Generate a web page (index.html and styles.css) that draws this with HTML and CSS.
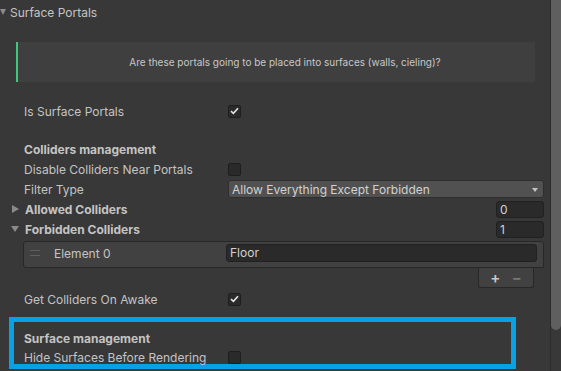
FILE: index.html
```html
<!DOCTYPE html>
<html lang="en">
<head>
    <meta charset="UTF-8">
    <meta name="viewport" content="width=device-width, initial-scale=1.0">
    <title>Surface Portals</title>
    <link rel="stylesheet" href="styles.css">
</head>
<body>
    <div class="window">
        <div class="inspector">
            <div class="foldout-header"><span class="tri-down"></span>Surface Portals</div>

            <div class="help-box">Are these portals going to be placed into surfaces (walls, cieling)?</div>

            <div class="field-row first">
                <span class="label">Is Surface Portals</span>
                <span class="toggle">
                    <svg width="9" height="8" viewBox="0 0 9 8"><path d="M1 4.2 L3.4 6.4 L8 1.2" fill="none" stroke="#e4e4e4" stroke-width="1.6"/></svg>
                </span>
            </div>

            <div class="section-title">Colliders management</div>
            <div class="field-row">
                <span class="label">Disable Colliders Near Portals</span>
                <span class="toggle"></span>
            </div>
            <div class="field-row">
                <span class="label">Filter Type</span>
                <div class="dropdown">Allow Everything Except Forbidden<span class="arrow"></span></div>
            </div>
            <div class="field-row foldout">
                <span class="tri-right"></span>
                <span class="label bold">Allowed Colliders</span>
                <span class="int-field">0</span>
            </div>
            <div class="field-row foldout">
                <span class="tri-open"></span>
                <span class="label bold">Forbidden Colliders</span>
                <span class="int-field">1</span>
            </div>

            <div class="list-box">
                <div class="list-item">
                    <span class="handle"></span>
                    <span class="item-label">Element 0</span>
                    <div class="text-field">Floor</div>
                </div>
            </div>
            <div class="list-footer">
                <span class="plus">+</span>
                <span class="minus">&minus;</span>
            </div>

            <div class="field-row awake">
                <span class="label">Get Colliders On Awake</span>
                <span class="toggle">
                    <svg width="9" height="8" viewBox="0 0 9 8"><path d="M1 4.2 L3.4 6.4 L8 1.2" fill="none" stroke="#e4e4e4" stroke-width="1.6"/></svg>
                </span>
            </div>

            <div class="highlight">
                <div class="section-title small">Surface management</div>
                <div class="field-row small">
                    <span class="label inner">Hide Surfaces Before Rendering</span>
                    <span class="toggle"></span>
                </div>
            </div>
        </div>
        <div class="scrollbar"><div class="thumb"></div></div>
    </div>
</body>
</html>
```

FILE: styles.css
```css
body {
    margin: 0;
    background-color: #383838;
    font-family: Inter, "Noto Sans", sans-serif;
    font-size: 12px;
    color: #c4c4c4;
    overflow: hidden;
}
.window {
    display: flex;
    width: 561px;
    height: 371px;
}
.inspector {
    width: 544px;
    padding-right: 6px;
}
.foldout-header {
    display: flex;
    align-items: center;
    height: 24px;
}
.tri-down {
    width: 0;
    height: 0;
    border-left: 3px solid transparent;
    border-right: 3px solid transparent;
    border-top: 6px solid #8c8c8c;
    margin-right: 4px;
}
.help-box {
    margin: 18px 9px 0 16px;
    height: 40px;
    background-color: #3f3f3f;
    border-left: 2px solid #3fc77e;
    padding-left: 17px;
    display: flex;
    align-items: center;
    justify-content: center;
    font-size: 10px;
    color: #c8c8c8;
}
.field-row {
    display: flex;
    align-items: center;
    height: 20px;
    padding-left: 24px;
}
.field-row.first {
    margin-top: 19px;
}
.field-row.awake {
    margin-top: 1px;
}
.label {
    width: 204px;
    flex-shrink: 0;
    white-space: nowrap;
}
.bold {
    font-weight: 700;
}
.section-title {
    margin-top: 19px;
    height: 19px;
    line-height: 19px;
    padding-left: 24px;
    font-weight: 700;
}
.toggle {
    width: 11px;
    height: 11px;
    background-color: #2a2a2a;
    border: 1px solid #1e1e1e;
    border-radius: 2px;
    display: flex;
    align-items: center;
    justify-content: center;
}
.dropdown {
    flex: 1;
    height: 16px;
    background-color: #515151;
    border: 1px solid #2f2f2f;
    border-radius: 3px;
    padding-left: 3px;
    display: flex;
    align-items: center;
    color: #d2d2d2;
    position: relative;
}
.arrow {
    position: absolute;
    right: 5px;
    top: 7px;
    border-left: 3.5px solid transparent;
    border-right: 3.5px solid transparent;
    border-top: 4px solid #c4c4c4;
}
.foldout {
    padding-left: 12px;
}
.foldout .label {
    width: auto;
}
.tri-right {
    width: 0;
    height: 0;
    border-top: 4px solid transparent;
    border-bottom: 4px solid transparent;
    border-left: 7px solid #8a8a8a;
    margin-right: 6px;
}
.tri-open {
    width: 0;
    height: 0;
    border-left: 4px solid transparent;
    border-right: 4px solid transparent;
    border-top: 6px solid #8a8a8a;
    margin-left: -1px;
    margin-right: 6px;
}
.int-field {
    margin-left: auto;
    width: 43px;
    height: 15px;
    background-color: #2a2a2a;
    border: 1px solid #212121;
    border-radius: 3px;
    padding-left: 3px;
    line-height: 15px;
    color: #d2d2d2;
}
.list-box {
    margin: 2px 0 0 23px;
    height: 23px;
    background-color: #414141;
    border: 1px solid #282828;
    border-radius: 3px 3px 0 3px;
    padding-top: 2px;
    box-sizing: content-box;
}
.list-item {
    display: flex;
    align-items: center;
    height: 18px;
}
.handle {
    width: 10px;
    height: 4px;
    border-top: 1px solid #5f5f5f;
    border-bottom: 1px solid #5f5f5f;
    margin: 0 14px 0 6px;
}
.item-label {
    width: 172px;
    flex-shrink: 0;
}
.text-field {
    flex: 1;
    height: 16px;
    line-height: 16px;
    margin-right: 6px;
    background-color: #2a2a2a;
    border: 1px solid #212121;
    border-radius: 3px;
    padding-left: 3px;
    color: #d2d2d2;
}
.list-footer {
    margin: 0 10px 0 auto;
    width: 54px;
    height: 19px;
    background-color: #414141;
    border: 1px solid #282828;
    border-top: none;
    border-radius: 0 0 3px 3px;
    display: flex;
    align-items: center;
    justify-content: space-evenly;
    font-size: 15px;
    font-weight: 600;
    line-height: 1;
}
.plus {
    color: #c8c8c8;
}
.minus {
    color: #7a7a7a;
}
.highlight {
    margin: 8px 0 0 9px;
    width: 507px;
    height: 52px;
    box-sizing: border-box;
    border: 5px solid #08a1e4;
    padding-top: 8px;
}
.section-title.small {
    margin-top: 0;
    height: 18px;
    line-height: 18px;
    padding-left: 10px;
}
.field-row.small {
    height: 18px;
    padding-left: 10px;
}
.label.inner {
    width: 204px;
}
.scrollbar {
    width: 10px;
    border-left: 1px solid #2c2c2c;
    background-color: #383838;
}
.thumb {
    width: 10px;
    height: 330px;
    background-color: #5f5f5f;
    border-radius: 0 0 5px 5px;
}
```
